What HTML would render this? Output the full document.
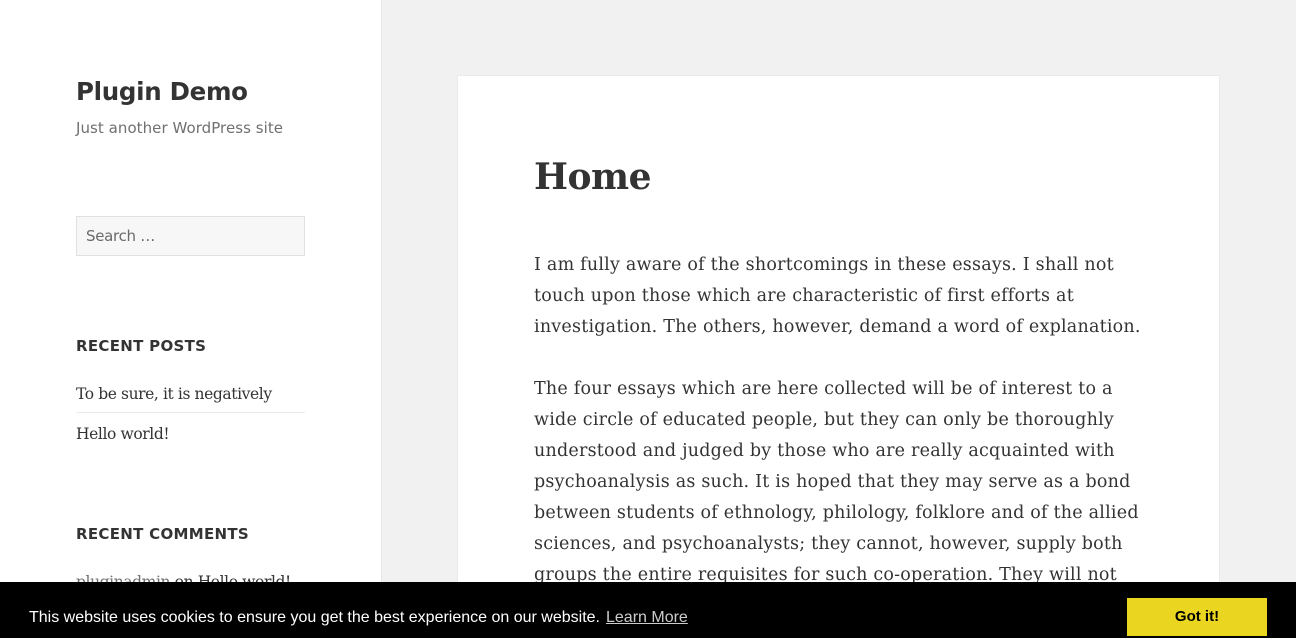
<!DOCTYPE html>
<html><head><meta charset="utf-8"><style>
html,body{margin:0;width:1296px;height:638px;overflow:hidden}
body{background:#f1f1f1;position:relative;font-family:"DejaVu Serif","Liberation Serif",serif;color:#333}
.side{position:absolute;left:0;top:0;width:381px;height:638px;background:#fff;border-right:1px solid #e6e6e6}
.title{position:absolute;left:76px;top:77px;font:bold 24.5px "DejaVu Sans","Liberation Sans",sans-serif;color:#333;letter-spacing:-0.3px}
.desc{position:absolute;left:76px;top:119px;font:15px "DejaVu Sans","Liberation Sans",sans-serif;color:#707070;letter-spacing:0.05px}
.search{position:absolute;left:76px;top:216px;width:227px;height:38px;border:1px solid #e1e1e1;background:#f7f7f7}
.search span{position:absolute;left:9px;top:10px;font:15px "DejaVu Sans","Liberation Sans",sans-serif;color:#6a6a6a;letter-spacing:-0.3px}
.wt{position:absolute;left:76px;font:bold 15px "DejaVu Sans","Liberation Sans",sans-serif;letter-spacing:0.3px;color:#333}
.li{position:absolute;left:76px;width:229px;font-size:15.5px;color:#333;letter-spacing:-0.4px}
.card{position:absolute;left:457px;top:75px;width:763px;height:563px;background:#fff;border:1px solid #eaeaea;border-bottom:none;box-sizing:border-box}
h1{position:absolute;left:534px;top:156px;margin:0;font-size:36px;font-weight:bold;letter-spacing:-0.5px;color:#333}
.p{position:absolute;left:534px;font-size:17.5px;line-height:31px;color:#333;letter-spacing:0.22px;margin:0;white-space:nowrap}
.bar{position:absolute;left:0;top:582px;width:1296px;height:56px;background:#000}
.bar .t{position:absolute;left:29px;top:27px;font:16px "Liberation Sans",sans-serif;color:#fff;white-space:nowrap}
.bar a{color:#fff;text-decoration:underline;opacity:.8;margin-left:6px}
.btn{position:absolute;left:1127px;top:16px;width:140px;height:38px;background:#ead621;font:bold 15px "Liberation Sans",sans-serif;color:#000;text-align:center;line-height:38px}
</style></head><body>
<div class="side"></div>
<div class="title">Plugin Demo</div>
<div class="desc">Just another WordPress site</div>
<div class="search"><span>Search …</span></div>
<div class="wt" style="top:337px">RECENT POSTS</div>
<div class="li" style="top:385px;padding-bottom:9px;border-bottom:1px solid #eaeaea">To be sure, it is negatively</div>
<div class="li" style="top:425px">Hello world!</div>
<div class="wt" style="top:525px">RECENT COMMENTS</div>
<div class="li" style="top:573px"><span style="color:#707070">pluginadmin</span> on Hello world!</div>
<div class="card"></div>
<h1>Home</h1>
<p class="p" style="top:250px">I am fully aware of the shortcomings in these essays. I shall not<br>touch upon those which are characteristic of first efforts at<br>investigation. The others, however, demand a word of explanation.</p>
<p class="p" style="top:374px">The four essays which are here collected will be of interest to a<br>wide circle of educated people, but they can only be thoroughly<br>understood and judged by those who are really acquainted with<br>psychoanalysis as such. It is hoped that they may serve as a bond<br>between students of ethnology, philology, folklore and of the allied<br>sciences, and psychoanalysts; they cannot, however, supply both<br>groups the entire requisites for such co-operation. They will not</p>
<div class="bar"><div class="t">This website uses cookies to ensure you get the best experience on our website.<a>Learn More</a></div><div class="btn">Got it!</div></div>
</body></html>
